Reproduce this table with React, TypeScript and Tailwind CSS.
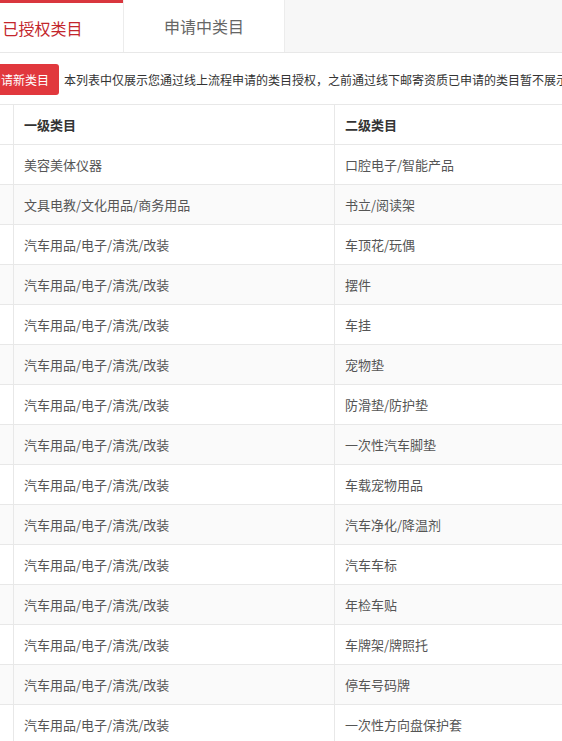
import React from 'react';

const CAR = '汽车用品/电子/清洗/改装';

const ROWS: [string, string][] = [
  ['美容美体仪器', '口腔电子/智能产品'],
  ['文具电教/文化用品/商务用品', '书立/阅读架'],
  [CAR, '车顶花/玩偶'],
  [CAR, '摆件'],
  [CAR, '车挂'],
  [CAR, '宠物垫'],
  [CAR, '防滑垫/防护垫'],
  [CAR, '一次性汽车脚垫'],
  [CAR, '车载宠物用品'],
  [CAR, '汽车净化/降温剂'],
  [CAR, '汽车车标'],
  [CAR, '年检车贴'],
  [CAR, '车牌架/牌照托'],
  [CAR, '停车号码牌'],
  [CAR, '一次性方向盘保护套'],
];

export default function App() {
  return (
    <div
      className="w-full overflow-hidden bg-white"
      style={{ fontFamily: '"Noto Sans CJK SC", "Noto Sans", sans-serif' }}
    >
      <div className="w-[760px] -ml-[38px]">
        {/* tabs */}
        <div className="flex h-[53px] border-b border-[#e8e8e8] bg-[#f7f7f7]">
          <div className="w-[161px] bg-white border-t-[3px] border-[#d9363e] flex items-center justify-center text-base text-[#c3262c]">
            已授权类目
          </div>
          <div className="w-[162px] bg-white border-l border-r border-[#ececec] flex items-center justify-center text-base text-[#666]">
            申请中类目
          </div>
        </div>

        <div className="pl-[17px]">
          <div className="flex items-center mt-[11px] h-[31px]">
            <button
              type="button"
              className="h-[31px] px-[10px] bg-[#e1383d] text-white text-xs rounded-[3px]"
            >
              申请新类目
            </button>
            <span className="ml-[5px] text-xs text-[#333] whitespace-nowrap">
              本列表中仅展示您通过线上流程申请的类目授权，之前通过线下邮寄资质已申请的类目暂不展示
            </span>
          </div>

          <div className="mt-[9px] border-t border-[#e8e8e8] text-[13px]">
            <div className="flex h-[40px] border-b border-[#e8e8e8] font-semibold text-[#333]">
              <div className="w-[35px] border-r border-[#e8e8e8] flex items-center justify-end pr-[13px]">
                <span className="w-[6px] h-[2px] bg-[#ddd]" />
              </div>
              <div className="w-[321px] border-r border-[#e8e8e8] flex items-center pl-[10px]">
                一级类目
              </div>
              <div className="w-[321px] flex items-center pl-[10px]">二级类目</div>
            </div>
            {ROWS.map(([a, b], i) => (
              <div
                key={i}
                className={`flex h-[40px] border-b border-[#e8e8e8] text-[#555] ${
                  i % 2 === 1 ? 'bg-[#fafafa]' : 'bg-white'
                }`}
              >
                <div className="w-[35px] border-r border-[#e8e8e8]" />
                <div className="w-[321px] border-r border-[#e8e8e8] flex items-center pl-[10px]">
                  {a}
                </div>
                <div className="w-[321px] flex items-center pl-[10px]">{b}</div>
              </div>
            ))}
          </div>
        </div>
      </div>
    </div>
  );
}
